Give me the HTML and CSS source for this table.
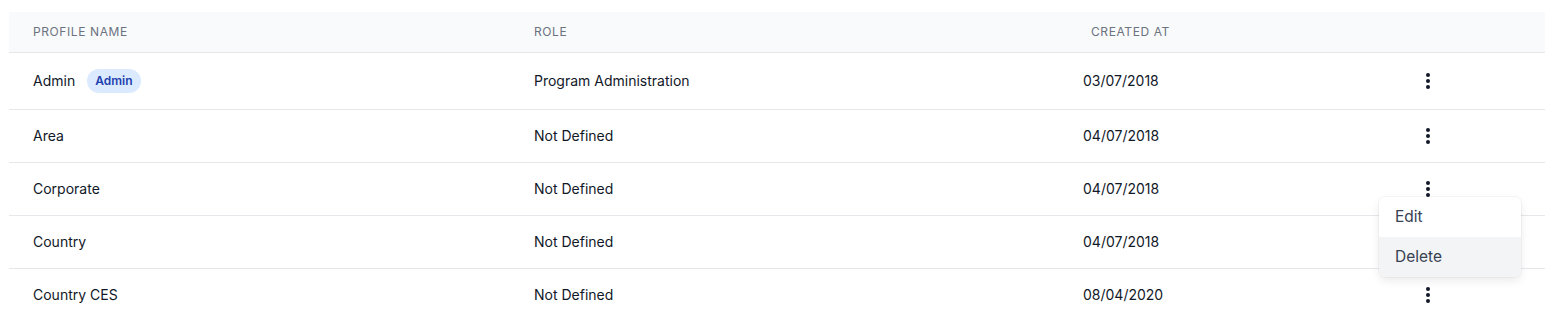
FILE: index.html
```html
<!DOCTYPE html>
<html>
<head>
<meta charset="utf-8">
<link rel="stylesheet" href="styles.css">
</head>
<body>
<div class="table">
  <div class="row head">
    <div class="cell">Profile Name</div>
    <div class="cell">Role</div>
    <div class="cell created">Created At</div>
    <div class="cell"></div>
  </div>
  <div class="row">
    <div class="cell name">Admin <span class="badge">Admin</span></div>
    <div class="cell">Program Administration</div>
    <div class="cell">03/07/2018</div>
    <div class="cell act"><span class="kebab"><svg width="4" height="16" viewBox="0 0 4 16"><circle cx="2" cy="2" r="2"/><circle cx="2" cy="8" r="2"/><circle cx="2" cy="14" r="2"/></svg></span></div>
  </div>
  <div class="row">
    <div class="cell">Area</div>
    <div class="cell">Not Defined</div>
    <div class="cell">04/07/2018</div>
    <div class="cell act"><span class="kebab"><svg width="4" height="16" viewBox="0 0 4 16"><circle cx="2" cy="2" r="2"/><circle cx="2" cy="8" r="2"/><circle cx="2" cy="14" r="2"/></svg></span></div>
  </div>
  <div class="row">
    <div class="cell">Corporate</div>
    <div class="cell">Not Defined</div>
    <div class="cell">04/07/2018</div>
    <div class="cell act"><span class="kebab"><svg width="4" height="16" viewBox="0 0 4 16"><circle cx="2" cy="2" r="2"/><circle cx="2" cy="8" r="2"/><circle cx="2" cy="14" r="2"/></svg></span>
      <div class="menu">
        <div class="item">Edit</div>
        <div class="item active">Delete</div>
      </div>
    </div>
  </div>
  <div class="row">
    <div class="cell">Country</div>
    <div class="cell">Not Defined</div>
    <div class="cell">04/07/2018</div>
    <div class="cell act"></div>
  </div>
  <div class="row">
    <div class="cell">Country CES</div>
    <div class="cell">Not Defined</div>
    <div class="cell">08/04/2020</div>
    <div class="cell act"><span class="kebab"><svg width="4" height="16" viewBox="0 0 4 16"><circle cx="2" cy="2" r="2"/><circle cx="2" cy="8" r="2"/><circle cx="2" cy="14" r="2"/></svg></span></div>
  </div>
</div>
</body>
</html>
```
FILE: styles.css
```css
html, body {
  margin: 0;
  background: #ffffff;
}
body {
  padding: 12px 8px 0 9px;
  font-family: Inter, "Liberation Sans", sans-serif;
  color: #111827;
  font-size: 14px;
  line-height: 20px;
}
.table {
  width: 1536px;
}
.row {
  display: grid;
  grid-template-columns: 501px 549px 321px 165px;
  border-bottom: 1px solid #e5e7eb;
  align-items: center;
}
.cell {
  padding: 16px 24px;
  display: flex;
  align-items: center;
  position: relative;
}
.head {
  background: #f9fafb;
  height: 40px;
}
.head .cell {
  padding: 0 24px;
  font-size: 12px;
  line-height: 16px;
  text-transform: uppercase;
  letter-spacing: 0.05em;
  color: #6b7280;
  font-weight: 400;
}
.head .cell.created {
  padding-left: 32px;
}
.badge {
  margin-left: 12px;
  display: inline-flex;
  align-items: center;
  height: 24px;
  padding: 0 8px;
  border-radius: 12px;
  background: #dbeafe;
  color: #1e40af;
  font-size: 12px;
  font-weight: 600;
}
.act {
  justify-content: flex-start;
  height: 20px;
}
.kebab {
  display: flex;
  justify-content: center;
  width: 48px;
  fill: #111827;
}
.menu {
  position: absolute;
  top: 34px;
  left: -1px;
  width: 142px;
  background: #fff;
  border-radius: 6px;
  box-shadow: 0 4px 10px rgba(0,0,0,0.08), 0 0 0 1px rgba(0,0,0,0.03);
  overflow: hidden;
  z-index: 2;
}
.item {
  height: 40px;
  display: flex;
  align-items: center;
  padding: 0 16px;
  font-size: 15.5px;
  color: #374151;
}
.item.active {
  background: #f3f4f6;
}
```
